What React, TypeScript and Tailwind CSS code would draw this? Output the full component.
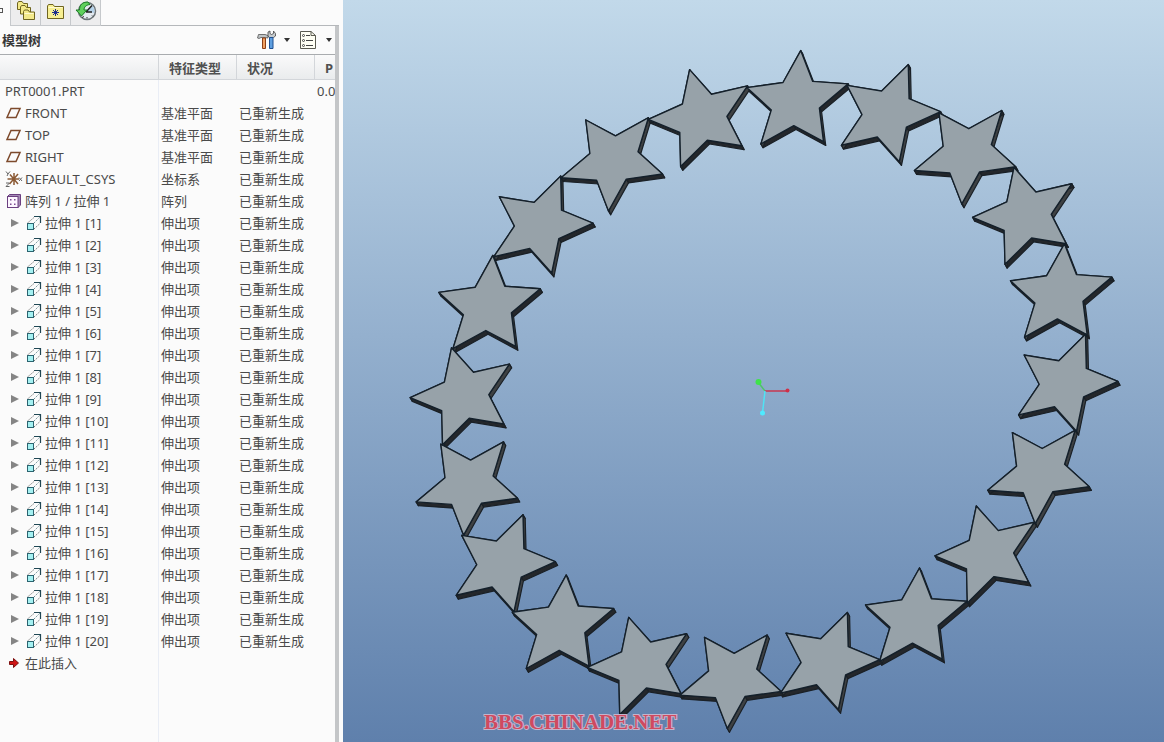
import React, { useState } from 'react';

type IconName = 'plane' | 'csys' | 'pattern' | 'extrude' | 'insert';

interface TreeItem {
    name: string;
    icon?: IconName;
    type?: string;
    status?: string;
    extra?: string;
    child?: boolean;
}

const DONE = '已重新生成';

const items: TreeItem[] = [
    { name: 'PRT0001.PRT', extra: '0.0' },
    { name: 'FRONT', icon: 'plane', type: '基准平面', status: DONE },
    { name: 'TOP', icon: 'plane', type: '基准平面', status: DONE },
    { name: 'RIGHT', icon: 'plane', type: '基准平面', status: DONE },
    { name: 'DEFAULT_CSYS', icon: 'csys', type: '坐标系', status: DONE },
    { name: '阵列 1 / 拉伸 1', icon: 'pattern', type: '阵列', status: DONE },
    ...Array.from({ length: 20 }, (_, i) => ({
        name: `拉伸 1 [${i + 1}]`,
        icon: 'extrude' as IconName,
        type: '伸出项',
        status: DONE,
        child: true,
    })),
    { name: '在此插入', icon: 'insert' },
];

function TreeIcon({ name }: { name: IconName }) {
    if (name === 'plane') {
        return (
            <svg width="17" height="16" viewBox="0 0 17 16" fill="none">
                <path d="M6 3.500H15L11 12.500H2Z" stroke="#7d4a2c" strokeWidth="1.500" />
            </svg>
        );
    }
    if (name === 'csys') {
        return (
            <svg width="18" height="18" viewBox="0 0 18 18" fill="none">
                <path d="M2.500 9H14M9 3V15M5 4.500L13 14M13 4L4.500 14" stroke="#8b5a35" strokeWidth="1.500" />
                <path d="M1 1.500L3 4L5 1.500M3 4L2 6M14 7.500L17 11M17 7.500L14 11M1 13H4.500L1 16.500H4.500" stroke="#666" strokeWidth="1" />
            </svg>
        );
    }
    if (name === 'pattern') {
        return (
            <svg width="17" height="16" viewBox="0 0 17 16">
                <path d="M2.500 3.500L4.500 1.500H15.500V12L13 14.500Z" fill="#a48ab4" stroke="#6b3f80" />
                <rect x="2.500" y="3.500" width="10.500" height="11" fill="#fdf6ff" stroke="#6b3f80" />
                <path d="M5 6h1.500v1.500H5zM9 6h1.500v1.500H9zM5 10.500h1.500v1.500H5zM9 10.500h1.500v1.500H9z" fill="#7a4a90" />
            </svg>
        );
    }
    if (name === 'extrude') {
        return (
            <svg width="17" height="16" viewBox="0 0 17 16" fill="none">
                <path d="M2.500 8L9 2.500M9 14L15 8.500" stroke="#777" strokeDasharray="1.500 1" />
                <path d="M9 8L15 2" stroke="#6f9098" strokeDasharray="1.500 1" />
                <path d="M9 1.500H15.500V8" stroke="#1f4653" strokeWidth="1.200" />
                <rect x="2.500" y="8.500" width="6" height="6" fill="#a5f1f2" stroke="#2c6470" />
            </svg>
        );
    }
    return (
        <svg width="16" height="16" viewBox="0 0 16 16">
            <path d="M4.500 6.500H8.500V3.500L13.500 8L8.500 12.500V9.500H4.500Z" fill="#d01515" stroke="#7d1010" />
        </svg>
    );
}

function FolderStackIcon() {
    return (
        <svg width="20" height="20" viewBox="0 0 20 20" fill="#f3e98a" stroke="#6f6420">
            <path d="M1.500 8.500V2L2.500 0.500H6L7.500 2.500H11.500V8.500Z" />
            <path d="M4.500 13V6L5.500 4.500H9L10.500 6.500H14.500V13Z" />
            <path d="M7.500 18.500V10.500L8.500 9H12L13.500 11H18.500V18.500Z" />
            <path d="M8.500 12.500H17.500" stroke="#fffbd0" />
        </svg>
    );
}

function FolderStarIcon() {
    return (
        <svg width="20" height="20" viewBox="0 0 20 20">
            <path d="M2.500 17.500V5L3.500 3.500H8L9.500 5.500H18.500V17.500Z" fill="#f7ef92" stroke="#6f6420" />
            <path d="M3.500 6.500H17.500" stroke="#fffbd0" />
            <path d="M10.500 8V15M7 11.500H14M8 9L13 14M13 9L8 14" stroke="#1c2c8c" />
        </svg>
    );
}

function HistoryIcon() {
    return (
        <svg width="22" height="22" viewBox="0 0 22 22" fill="none">
            <circle cx="12" cy="11" r="8.500" fill="#e4eaf0" stroke="#6c7478" strokeWidth="1.500" />
            <path d="M12 11L17 5.500A8 8 0 0 1 19 13Z" fill="#b4d2ea" />
            <path d="M11 12L17 5.500M11 12H17" stroke="#222" strokeWidth="1.500" />
            <path d="M7 17.500L9 16.500M12 18.500V17M17 15.500L18 16.500" stroke="#333" />
            <path d="M13 2C7 2 4.500 5 4.500 10H1L6.500 16L12 10H9C9 7 11 5 15 4.500Z" fill="#5fd05c" stroke="#1c7a26" />
        </svg>
    );
}

function ToolsIcon() {
    return (
        <svg width="20" height="20" viewBox="0 0 20 20">
            <path d="M0.500 8L1.500 4.500H8L11 5.500V8L8 7.500H4L2 8.500Z" fill="#bfc4c6" stroke="#555" strokeWidth="0.800" />
            <path d="M5.500 8H8.500V18.500H5.500Z" fill="#f0a060" stroke="#8c3f16" />
            <path d="M11 2L13 1V3.500L14.500 4.500L16.500 3.500V1L18.500 3.500V6L16.500 7.500H12.500L11 6Z" fill="#c5cacd" stroke="#444" strokeWidth="0.800" />
            <path d="M12.500 7.500H16V18.500H12.500Z" fill="#5f9fe0" stroke="#1f4f91" />
        </svg>
    );
}

function ListIcon() {
    return (
        <svg width="18" height="20" viewBox="0 0 18 20" fill="none">
            <path d="M1.500 1.500H12L16.500 5.500V18.500H1.500Z" fill="#fffff4" stroke="#5a5a50" />
            <path d="M12 1.500V5.500H16.500" stroke="#5a5a50" />
            <path d="M7 5.500H11M7 10.500H14M7 15.500H14" stroke="#444" />
            <circle cx="4.500" cy="5.500" r="1" stroke="#444" />
            <circle cx="4.500" cy="10.500" r="1" stroke="#444" />
            <circle cx="4.500" cy="15.500" r="1" stroke="#444" />
        </svg>
    );
}

function DropArrow() {
    return (
        <svg width="6" height="4" viewBox="0 0 6 4">
            <path d="M0 0H6L3 4Z" fill="#333" />
        </svg>
    );
}

function ModelTree() {
    const [open, setOpen] = useState<string | null>(null);

    return (
        <table className="h-full w-full table-fixed border-separate border-spacing-0 text-left">
            <colgroup>
                <col className="w-[159px]" />
                <col className="w-[78px]" />
                <col className="w-[78px]" />
                <col />
            </colgroup>
            <thead>
                <tr className="h-[25px] bg-linear-to-b from-[#fafafa] to-[#e9ebed] text-[#505050]">
                    <th className="border-r border-b border-[#d3d6da] p-0" aria-label="名称"></th>
                    <th className="border-r border-b border-[#d3d6da] p-0 pt-[2px] pl-[10px]">特征类型</th>
                    <th className="border-r border-b border-[#d3d6da] p-0 pt-[2px] pl-[10px]">状况</th>
                    <th className="border-b border-[#d3d6da] p-0 pt-[2px] pl-[10px]">P</th>
                </tr>
            </thead>
            <tbody>
                {items.map((item) => (
                    <tr key={item.name} className="h-[22px]">
                        <td className="border-r border-[#e9edf5] p-0">
                            <div className="flex h-[22px] items-center pl-[5px] whitespace-nowrap">
                                {item.child && (
                                    <button
                                        className="flex h-4 w-5 items-center justify-center"
                                        aria-label={`展开 ${item.name}`}
                                        onClick={() => setOpen(open === item.name ? null : item.name)}
                                    >
                                        <svg width="8" height="8" viewBox="0 0 8 8">
                                            <path d="M0 0L8 4L0 8Z" fill="#858585" />
                                        </svg>
                                    </button>
                                )}
                                {item.icon && (
                                    <span className="flex w-5 shrink-0">
                                        <TreeIcon name={item.icon} />
                                    </span>
                                )}
                                {item.name}
                            </div>
                        </td>
                        <td className="p-0 pl-[2px]">{item.type}</td>
                        <td className="p-0 pl-[2px]">{item.status}</td>
                        <td className="p-0 pl-[2px]">{item.extra}</td>
                    </tr>
                ))}
                {/* Stretches the column line down to the end of the panel */}
                <tr>
                    <td className="border-r border-[#e9edf5] p-0"></td>
                    <td colSpan={3} className="p-0"></td>
                </tr>
            </tbody>
        </table>
    );
}

function SidePanel() {
    return (
        <aside className="flex w-[343px] shrink-0 flex-col bg-[#fbfbfb]">
            {/* Tabs */}
            <div className="flex h-[26px] shrink-0">
                <div className="flex w-[10px] items-center border-b border-[#fbfbfb]">
                    <span className="mb-1 h-[5px] w-[3px] border border-l-0 border-[#555]"></span>
                </div>
                <button className="flex w-[31px] justify-center border-x border-b border-[#c6c9cc] bg-[#ededee] pt-[1px]" aria-label="模型树">
                    <FolderStackIcon />
                </button>
                <button className="flex w-[30px] justify-start border-r border-b border-[#c6c9cc] bg-[#ededee] pt-[1px] pl-1" aria-label="文件夹">
                    <FolderStarIcon />
                </button>
                <button className="flex w-[30px] justify-start border-r border-b border-[#c6c9cc] bg-[#ededee] pl-1" aria-label="历史记录">
                    <HistoryIcon />
                </button>
                <div className="mr-1 flex-1 border-b border-[#b5b8bb]"></div>
            </div>

            <div className="mr-1 flex flex-1 flex-col overflow-hidden border-r-4 border-[#c4c6c8]">
                {/* Title bar */}
                <div className="flex h-[29px] shrink-0 items-center border-b border-[#a9acaf] pl-[2px]">
                    <h1 className="flex-1 font-bold text-[#383838]">模型树</h1>
                    <button className="flex items-center gap-[7px]" aria-label="设置">
                        <ToolsIcon />
                        <DropArrow />
                    </button>
                    <button className="mr-[3px] ml-[9px] flex items-center gap-[9px]" aria-label="显示">
                        <ListIcon />
                        <DropArrow />
                    </button>
                </div>
                <div className="flex-1">
                    <ModelTree />
                </div>
            </div>
        </aside>
    );
}

type Point = [number, number];

const CENTER: Point = [421, 389.5];
const AXIS_P: Point = [32, -288];
const AXIS_Q: Point = [300.5, -6.1];
const DEPTH: Point = [2.2, 3.8];
const TIP = 0.177;
const NOTCH = 0.084;

// Point on the tilted circle, angle in degrees
function onRing(angle: number, scale: number): Point {
    const t = (angle * Math.PI) / 180;
    return [
        scale * (AXIS_P[0] * Math.cos(t) + AXIS_Q[0] * Math.sin(t)),
        scale * (AXIS_P[1] * Math.cos(t) + AXIS_Q[1] * Math.sin(t)),
    ];
}

function starPoints(index: number): Point[] {
    const [cx, cy] = onRing(index * 18, 1);
    return Array.from({ length: 10 }, (_, i) => {
        const [x, y] = onRing(index * 18 + i * 36 - 1, i % 2 ? NOTCH : TIP);
        return [CENTER[0] + cx + x, CENTER[1] + cy + y];
    });
}

const toAttr = (pts: Point[]) => pts.map(([x, y]) => `${x.toFixed(1)},${y.toFixed(1)}`).join(' ');

const stars = Array.from({ length: 20 }, (_, i) => starPoints(i));

function StarSides({ pts }: { pts: Point[] }) {
    return (
        <>
            {pts.map((a, i) => {
                const b = pts[(i + 1) % pts.length];
                const steep = Math.abs(b[1] - a[1]) > Math.abs(b[0] - a[0]);
                const quad: Point[] = [
                    a,
                    b,
                    [b[0] + DEPTH[0], b[1] + DEPTH[1]],
                    [a[0] + DEPTH[0], a[1] + DEPTH[1]],
                ];
                return <polygon key={i} points={toAttr(quad)} fill={steep ? '#3e4143' : '#24272b'} />;
            })}
        </>
    );
}

function Viewport() {
    return (
        <main className="relative flex-1 overflow-hidden bg-linear-to-b from-[#c2d9ea] to-[#5f80ac]">
            <svg className="block h-screen w-full" viewBox="0 0 821 742" role="img" aria-label="PRT0001">
                <g stroke="#1a2026" strokeWidth="1.200" strokeLinejoin="round">
                    {stars.map((pts, i) => (
                        <StarSides key={i} pts={pts} />
                    ))}
                </g>
                <g fill="#97a2a9" stroke="#14202b" strokeWidth="1.400" strokeLinejoin="round">
                    {stars.map((pts, i) => (
                        <polygon key={i} points={toAttr(pts)} />
                    ))}
                </g>
                {/* Spin center */}
                <g strokeWidth="1.500">
                    <path d="M422 391L415 382" stroke="#4fc46a" />
                    <path d="M422 391H444" stroke="#c8374f" />
                    <path d="M422 391L419.500 413" stroke="#4fe3f5" />
                    <circle cx="415.500" cy="382" r="3" fill="#3fe34a" />
                    <circle cx="444.500" cy="390.500" r="2" fill="#d02f48" />
                    <circle cx="419.500" cy="413" r="2.500" fill="#4feaff" />
                </g>
            </svg>
            <p className="absolute bottom-2 left-[141px] font-['Liberation_Serif',serif] text-[21px] leading-6 font-bold text-[#cf4a60] [-webkit-text-stroke:2px_#c5b4cc] [paint-order:stroke_fill]">
                BBS.CHINADE.NET
            </p>
        </main>
    );
}

function App() {
    return (
        <div className="flex min-h-screen font-['Noto_Sans','Noto_Sans_CJK_SC',sans-serif] text-[13px] leading-[22px] text-[#4a4a4a]">
            <SidePanel />
            <Viewport />
        </div>
    );
}

export default App;
